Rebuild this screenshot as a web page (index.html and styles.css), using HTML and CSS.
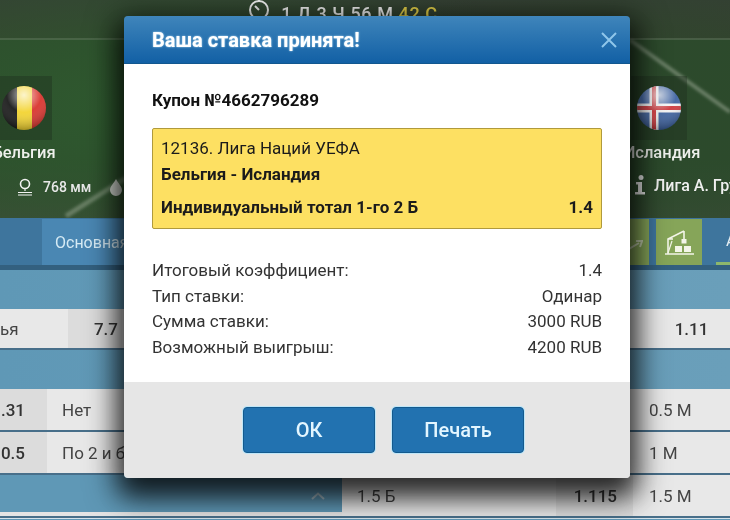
FILE: index.html
```html
<!DOCTYPE html>
<html lang="ru">
<head>
<meta charset="utf-8">
<title>Ваша ставка принята!</title>
<link rel="stylesheet" href="styles.css">
</head>
<body>
<div class="page">
  <header class="hero">
    <svg class="hero-art" width="730" height="218" viewBox="0 0 730 218">
      <defs><filter id="soft"><feGaussianBlur stdDeviation="1.5"/></filter></defs>
      <path d="M0 39H730" stroke="#8fa58c" stroke-opacity=".5" stroke-width="1"/>
      <path d="M630 40L730 112" stroke="#c8d0c0" stroke-opacity=".4" stroke-width="4" filter="url(#soft)"/>
      <path d="M66 216L126 178" stroke="#c8d0c0" stroke-opacity=".35" stroke-width="5" filter="url(#soft)"/>
    </svg>
    <div class="timer">
      <svg class="timer-icon" width="22" height="26" viewBox="0 0 22 26"><circle cx="11" cy="14" r="9" fill="none" stroke="#f2f2f2" stroke-width="2"/><path d="M11 2V5M7 2H15M7 10L11 14" stroke="#f2f2f2" stroke-width="2" fill="none"/></svg>
      <span>1 Д 3 Ч 56 М <em class="timer-sec">42 С</em></span>
    </div>
    <div class="teams">
      <div class="team team-left">
        <div class="flag-box">
          <svg width="46" height="46" viewBox="0 0 46 46"><defs><clipPath id="c1"><circle cx="23" cy="23" r="22"/></clipPath><radialGradient id="gl" cx="50%" cy="22%" r="75%"><stop offset="0" stop-color="#fff" stop-opacity=".75"/><stop offset=".5" stop-color="#fff" stop-opacity=".05"/><stop offset="1" stop-color="#000" stop-opacity=".3"/></radialGradient></defs><g clip-path="url(#c1)"><rect width="16" height="46" fill="#1b1b1b"/><rect x="16" width="15" height="46" fill="#f3d432"/><rect x="31" width="15" height="46" fill="#d9352f"/><rect width="46" height="46" fill="url(#gl)"/></g></svg>
        </div>
        <div class="team-name">Бельгия</div>
      </div>
      <div class="team team-right">
        <div class="flag-box">
          <svg width="46" height="46" viewBox="0 0 46 46"><defs><clipPath id="c2"><circle cx="23" cy="23" r="22"/></clipPath></defs><g clip-path="url(#c2)"><rect width="46" height="46" fill="#3f64a2"/><path d="M0 23H46M18 0V46" stroke="#f4f4f4" stroke-width="9"/><path d="M0 23H46M18 0V46" stroke="#cf3a3f" stroke-width="4"/><rect width="46" height="46" fill="url(#gl)"/></g></svg>
        </div>
        <div class="team-name">Исландия</div>
      </div>
    </div>
    <div class="stats">
      <div class="stat">
        <svg class="stat-icon" width="16" height="18" viewBox="0 0 16 18"><circle cx="8" cy="6" r="4.5" fill="none" stroke="#f2f2f2" stroke-width="1.6"/><path d="M8 11V13M1 14.5H15M1 17H15" stroke="#f2f2f2" stroke-width="1.2"/></svg>
        <span class="stat-val">768 мм</span>
        <svg class="stat-icon drop" width="12" height="17" viewBox="0 0 12 17"><path d="M6 0C8 4 12 7.500 12 11A6 6 0 0 1 0 11C0 7.500 4 4 6 0Z" fill="#cfd4cc"/></svg>
      </div>
      <div class="stat stat-league">
        <svg class="stat-icon" width="12" height="20" viewBox="0 0 12 20"><circle cx="7" cy="2.500" r="2.500" fill="#e4e4e4"/><path d="M2 7H8V17H11V19.500H1V17H4V9.500H2Z" fill="#e4e4e4"/></svg>
        <span class="league-name">Лига А. Группа 2</span>
      </div>
    </div>
  </header>

  <nav class="nav">
    <div class="tab tab-main">Основная</div>
    <div class="nav-tools">
      <div class="tool">
        <svg class="tool-arrow" width="14" height="12" viewBox="0 0 14 12"><path d="M0 10L10 4M7 2L13 2L11 8" stroke="#c5cfae" stroke-width="2" fill="none"/></svg>
      </div>
      <div class="tool tool-crane">
        <svg width="32" height="32" viewBox="0 0 32 32"><path d="M2 28H31M5 28V13L21 5M5 13H10M21 5V13" stroke="#f3f5e8" stroke-width="1.600" fill="none"/><path d="M5 27L9 15" stroke="#f3f5e8" stroke-width="1.200"/><rect x="18.500" y="13" width="5" height="4.500" fill="#f3f5e8"/><rect x="12" y="20" width="7" height="6" fill="#f3f5e8"/><rect x="21" y="20" width="7" height="6" fill="#f3f5e8"/></svg>
      </div>
      <div class="tab-last">А</div>
    </div>
  </nav>

  <main class="board">
    <div class="band"></div>
    <div class="row row-a">
      <div class="cell">ья</div>
      <div class="cell cell-odd cell-num">7.7</div>
      <div class="cell"></div>
      <div class="cell cell-num cell-center">1.11</div>
    </div>
    <div class="band"></div>
    <div class="row row-b">
      <div class="cell cell-odd cell-num">.31</div>
      <div class="cell">Нет</div>
      <div class="cell"></div>
      <div class="cell"></div>
      <div class="cell">0.5 М</div>
    </div>
    <div class="row row-b">
      <div class="cell cell-odd cell-num">0.5</div>
      <div class="cell">По 2 и более</div>
      <div class="cell"></div>
      <div class="cell"></div>
      <div class="cell">1 М</div>
    </div>
    <div class="row row-c">
      <div class="cell cell-blue"><svg width="14" height="8" viewBox="0 0 14 8"><path d="M1 7L7 1.500L13 7" stroke="#a9c0cb" stroke-width="2" fill="none"/></svg></div>
      <div class="cell">1.5 Б</div>
      <div class="cell cell-odd cell-num">1.115</div>
      <div class="cell">1.5 М</div>
    </div>
    <div class="row-tail"></div>
  </main>

  <section class="modal">
    <div class="modal-head">
      <h1 class="modal-title">Ваша ставка принята!</h1>
      <svg class="modal-close" width="18" height="18" viewBox="0 0 18 18"><path d="M2 2L16 16M16 2L2 16" stroke="#8fc6ea" stroke-width="2"/></svg>
    </div>
    <div class="modal-body">
      <div class="coupon">Купон №4662796289</div>
      <div class="bet">
        <div class="bet-league">12136. Лига Наций УЕФА</div>
        <div class="bet-match">Бельгия - Исландия</div>
        <div class="bet-line"><span>Индивидуальный тотал 1-го 2 Б</span><span>1.4</span></div>
      </div>
      <dl class="summary">
        <div class="summary-row"><dt>Итоговый коэффициент:</dt><dd>1.4</dd></div>
        <div class="summary-row"><dt>Тип ставки:</dt><dd>Одинар</dd></div>
        <div class="summary-row"><dt>Сумма ставки:</dt><dd>3000 RUB</dd></div>
        <div class="summary-row"><dt>Возможный выигрыш:</dt><dd>4200 RUB</dd></div>
      </dl>
    </div>
    <div class="modal-foot">
      <button class="btn">ОК</button>
      <button class="btn">Печать</button>
    </div>
  </section>
</div>
</body>
</html>
```
FILE: styles.css
```css
* { box-sizing: border-box; }
html, body { margin: 0; padding: 0; }
body { font-family: Roboto, "Liberation Sans", sans-serif; background: #5f98b6; }
.page { position: relative; width: 730px; height: 520px; overflow: hidden; filter: blur(.35px); }

.hero { position: relative; height: 218px; overflow: hidden; color: #f2f2f2;
  background: radial-gradient(ellipse 420px 170px at 150px 110px, #2f5a2f 0%, rgba(47,90,47,0) 100%),
    radial-gradient(ellipse 300px 170px at 640px 130px, #2c4a2c 0%, rgba(44,74,44,0) 100%),
    linear-gradient(#353f34 0, #35402f 39px, #2d4a2c 40px, #2c4a2b 160px, #3a4c36 218px); }
.hero-art { position: absolute; left: 0; top: 0; }
.timer { position: relative; display: flex; justify-content: center; align-items: flex-start; gap: 11px; height: 28px; margin-left: -44px; font-size: 18px; font-weight: 500; line-height: 20px; }
.timer-icon { margin-top: -4px; }
.timer span { padding-top: 4px; letter-spacing: .6px; }
.timer-sec { font-style: normal; color: #e6d24a; }
.teams { position: relative; display: flex; justify-content: space-between; margin-top: 48px; padding-right: 12px; margin-left: -32px; }
.team { display: flex; flex-direction: column; align-items: center; width: 112px; }
.team-right .flag-box { margin-right: 6px; }
.flag-box { display: flex; align-items: center; justify-content: center; width: 56px; height: 64px; background: rgba(30,45,30,.4); }
.team-name { margin-top: 3px; font-size: 16.500px; line-height: 20px; font-weight: 500; color: #eef0ec; }
.stats { position: relative; display: flex; justify-content: space-between; align-items: center; margin-top: 15px; padding-left: 17px; }
.stat { display: flex; align-items: center; }
.stat-icon { flex: none; }
.stat-val { margin-left: 10px; font-size: 14px; font-weight: 500; color: #e8e8e8; }
.drop { margin-left: 19px; }
.stat-league { width: 96px; margin-top: -4px; }
.league-name { margin-left: 8px; white-space: nowrap; font-size: 16px; font-weight: 500; color: #f0f0f0; }

.nav { display: flex; justify-content: space-between; height: 52px; padding-top: 1px; background: #3e759d; border-bottom: 5px solid #33607f; }
.tab { display: flex; align-items: center; width: 100px; height: 46px; margin-left: 42px; padding-left: 13px; background: #4a87b3; color: #d6ebf5; font-size: 16px; }
.nav-tools { display: flex; gap: 7px; }
.tool { display: flex; align-items: center; justify-content: center; width: 46px; height: 46px; background: #86a559; }
.tool-arrow { margin-left: 20px; margin-top: 6px; }
.tab-last { width: 14px; margin-left: 7px; height: 46px; padding: 12px 0 0 10px; color: #e4eef2; font-size: 16px; border-bottom: 3px solid #8db76c; }

.board { display: flex; flex-direction: column; background: #5f98b6; }
.band { height: 39px; flex: none; background: linear-gradient(90deg, #5f98b6, #6a9fba); }
.row { display: grid; flex: none; height: 41px; border-bottom: 2px solid #486f8a; color: #333; font-size: 17px; box-shadow: 0 1px 0 #d5e2ea; }
.row-b, .row-c { height: 43px; }
.row-a { grid-template-columns: 68px 54px 531px 77px; }
.row-b { grid-template-columns: 47px 295px 214px 77px 97px; }
.row-c { grid-template-columns: 342px 214px 77px 97px; }
.cell { display: flex; align-items: center; padding-left: 15px; background: #e8e8e8; color: #444; white-space: nowrap; overflow: hidden; }
.row-a .cell:first-child { padding-left: 0; }
.row-b .cell:last-child, .row-c .cell:last-child { padding-left: 16px; }
.cell-odd { background: #dcdcdc; }
.cell-num { justify-content: flex-end; padding: 0 4px 0 0; font-weight: 500; font-size: 17px; color: #333; }
.row-b .cell-num { padding: 0 22px 0 0; }
.cell-center { justify-content: center; padding: 0; }
.cell-blue { justify-content: flex-end; padding: 0 17px 0 0; background: linear-gradient(#5f98b6 37px, #e4e4e4 37px); }
.row-c .cell-num { padding-right: 16px; }
.row-tail { flex: 1; background: #e4e4e4; }

.modal { position: absolute; left: 124px; top: 16px; width: 506px; height: 462px; display: flex; flex-direction: column; border-radius: 4px; overflow: hidden; box-shadow: 0 10px 30px 8px rgba(0,0,0,.7), 0 16px 24px rgba(0,0,0,.45); }
.modal-head { display: flex; justify-content: space-between; align-items: center; height: 48px; padding: 0 12px 0 28px; background: linear-gradient(#3f85bb, #1260a5); border-bottom: 1px solid #12578f; }
.modal-title { margin: 0; font-size: 20px; font-weight: 700; color: #fff; text-shadow: 0 0 2px #bfe4f7; }
.modal-body { flex: 1; padding: 26px 28px 0; background: #fff; color: #222; }
.coupon { font-size: 17px; font-weight: 700; line-height: 20px; color: #111; }
.bet { margin-top: 18px; height: 101px; padding: 8px 8px 0; background: #fde062; border: 1px solid #b09a3c; border-radius: 2px; font-size: 17px; color: #1b1b1b; }
.bet-league { line-height: 22px; }
.bet-match { line-height: 22px; margin-top: 4px; font-weight: 700; }
.bet-line { display: flex; justify-content: space-between; margin-top: 11px; line-height: 22px; font-weight: 700; }
.summary { margin: 29px 0 0; font-size: 17px; color: #333; }
.summary-row { display: flex; justify-content: space-between; height: 25.500px; line-height: 25.500px; }
.summary dt, .summary dd { margin: 0; }
.modal-foot { display: flex; justify-content: center; gap: 17px; height: 96px; padding: 25px 0 0 13px; background: #e6e6e6; }
.btn { width: 132px; height: 46px; border: 1px solid #145a8e; border-radius: 4px; background: #2272b0; color: #e3f6ff; font: 500 20px Roboto, "Liberation Sans", sans-serif; box-shadow: 0 0 0 1px #bfe6f8; }
```
